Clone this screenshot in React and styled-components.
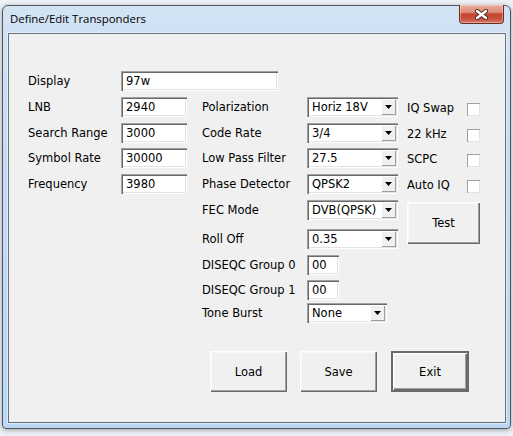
import React from 'react';
import styled, { createGlobalStyle } from 'styled-components';

const GlobalStyle = createGlobalStyle`
  html, body {
    margin: 0;
    padding: 0;
    background: #eef1f5;
  }
  body {
    width: 513px;
    height: 436px;
    overflow: hidden;
    font-family: "DejaVu Sans", Tahoma, sans-serif;
  }
`;

const leftRows = [
  { label: 'LNB', value: '2940' },
  { label: 'Search Range', value: '3000' },
  { label: 'Symbol Rate', value: '30000' },
  { label: 'Frequency', value: '3980' }
];

const comboRows = [
  { label: 'Polarization', value: 'Horiz 18V' },
  { label: 'Code Rate', value: '3/4' },
  { label: 'Low Pass Filter', value: '27.5' },
  { label: 'Phase Detector', value: 'QPSK2' },
  { label: 'FEC Mode', value: 'DVB(QPSK)' },
  { label: 'Roll Off', value: '0.35' }
];

const checkRows = ['IQ Swap', '22 kHz', 'SCPC', 'Auto IQ'];

const CloseGlyph = () => (
  <svg width='13' height='11' viewBox='0 0 13 11'>
    <path d='M2 2 L11 9 M11 2 L2 9' stroke='#4b2620' strokeWidth='4.2' strokeLinecap='round' />
    <path d='M2 2 L11 9 M11 2 L2 9' stroke='#ffffff' strokeWidth='2.4' strokeLinecap='round' />
  </svg>
);

const DropArrow = () => (
  <svg width='7' height='4' viewBox='0 0 7 4'>
    <polygon points='0,0 7,0 3.5,4' fill='#000' />
  </svg>
);

const Combo = ({ row, value, width }) => (
  <ComboBox $row={row} $width={width}>
    <ComboText>{value}</ComboText>
    <DropButton>
      <DropArrow />
    </DropButton>
  </ComboBox>
);

const App = () => {
  const mapLeft = () =>
    leftRows.map((item, i) => (
      <React.Fragment key={item.label}>
        <Label $row={i + 2} $col={1}>{item.label}</Label>
        <Field $row={i + 2} $col={2} $width={66} readOnly value={item.value} />
      </React.Fragment>
    ));

  const mapCombos = () =>
    comboRows.map((item, i) => (
      <React.Fragment key={item.label}>
        <Label $row={i + 2} $col={3}>{item.label}</Label>
        <Combo row={i + 2} value={item.value} width={91} />
      </React.Fragment>
    ));

  const mapChecks = () =>
    checkRows.map((name, i) => (
      <React.Fragment key={name}>
        <Label $row={i + 2} $col={5} $drop={1}>{name}</Label>
        <CheckBox $row={i + 2} />
      </React.Fragment>
    ));

  return (
    <>
      <GlobalStyle />
      <Desktop>
        <Window>
          <TitleBar>
            <Title>Define/Edit Transponders</Title>
            <CloseButton>
              <CloseGlyph />
            </CloseButton>
          </TitleBar>
          <ClientArea>
            <Form>
              <Label $row={1} $col={1}>Display</Label>
              <Field $row={1} $col={2} $span={2} $width={157} readOnly value='97w' />

              {mapLeft()}
              {mapCombos()}
              {mapChecks()}

              <TestButton>Test</TestButton>

              <Label $row={8} $col={3}>DISEQC Group 0</Label>
              <Field $row={8} $col={4} $width={32} readOnly value='00' />
              <Label $row={9} $col={3}>DISEQC Group 1</Label>
              <Field $row={9} $col={4} $width={32} readOnly value='00' />

              <Label $row={10} $col={3}>Tone Burst</Label>
              <Combo row={10} value='None' width={80} />
            </Form>

            <ButtonRow>
              <PushButton>Load</PushButton>
              <PushButton>Save</PushButton>
              <PushButton $default>Exit</PushButton>
            </ButtonRow>
          </ClientArea>
        </Window>
      </Desktop>
    </>
  );
};

export default App;

const sunken = `
  box-shadow: inset 1px 1px #a0a0a0, inset 2px 2px #696969,
    inset -1px -1px #ffffff, inset -2px -2px #e3e3e3;
`;

const raised = `
  box-shadow: inset 1px 1px #ffffff, inset -1px -1px #696969,
    inset -2px -2px #a0a0a0, inset 2px 2px #f8f8f8;
`;

const Desktop = styled.div`
  padding: 5px 2px 0 2px;
`;

const Window = styled.div`
  width: 509px;
  height: 424px;
  box-sizing: border-box;
  display: flex;
  flex-direction: column;
  padding: 0 4px 5px 5px;
  border: 1px solid #4d5864;
  border-radius: 6px 6px 4px 4px;
  background: linear-gradient(180deg, #d2e3f4 0%, #c4daf0 45%, #bcd7f3 100%);
  box-shadow: 0 1px 5px rgba(0, 0, 0, 0.35);
`;

const TitleBar = styled.div`
  height: 27px;
  display: flex;
  justify-content: space-between;
  align-items: flex-start;
`;

const Title = styled.div`
  padding: 5px 0 0 2px;
  font-family: "Open Sans", "Noto Sans", sans-serif;
  font-size: 11.4px;
  line-height: 16px;
  color: #000;
`;

const CloseButton = styled.div`
  width: 45px;
  height: 19px;
  box-sizing: border-box;
  margin: -1px 2px 0 0;
  display: flex;
  align-items: center;
  justify-content: center;
  border: 1px solid #6b2b22;
  border-top: none;
  border-radius: 0 0 4px 4px;
  background: linear-gradient(
    180deg,
    #e9ac9e 0%,
    #df8e7b 40%,
    #c44630 50%,
    #c64f3b 75%,
    #d77b69 100%
  );
  box-shadow: inset 0 0 0 1px rgba(255, 255, 255, 0.35);
`;

const ClientArea = styled.div`
  flex: 1;
  padding: 37px 0 0 19px;
  background: #f0f0f0;
  border: 1px solid #66737f;
  box-shadow: 0 0 0 1px rgba(255, 255, 255, 0.45);
  font-size: 11.5px;
  color: #000;
`;

const Form = styled.div`
  display: grid;
  grid-template-columns: 93px 81px 105px 100px 60px 13px;
  grid-template-rows: 26px 26px 25px 26px 26px 29px 26px 25px 23px 20px;
  align-items: start;
`;

const Label = styled.div`
  grid-row: ${p => p.$row};
  grid-column: ${p => p.$col};
  height: 20px;
  line-height: 20px;
  padding-top: ${p => (p.$drop ? 1 : 0)}px;
  white-space: nowrap;
`;

const Field = styled.input`
  grid-row: ${p => p.$row};
  grid-column: ${p => p.$col} / span ${p => p.$span || 1};
  width: ${p => p.$width}px;
  height: 20px;
  box-sizing: border-box;
  margin: 0;
  padding: 0 0 0 5px;
  border: none;
  outline: none;
  background: #fff;
  font-family: inherit;
  font-size: 11.5px;
  color: #000;
  ${sunken}
`;

const ComboBox = styled.div`
  grid-row: ${p => p.$row};
  grid-column: 4;
  width: ${p => p.$width}px;
  height: 20px;
  box-sizing: border-box;
  padding: 2px;
  display: flex;
  align-items: stretch;
  background: #fff;
  ${sunken}
`;

const ComboText = styled.div`
  flex: 1;
  padding-left: 3px;
  line-height: 16px;
  white-space: nowrap;
  overflow: hidden;
`;

const DropButton = styled.div`
  width: 15px;
  display: flex;
  align-items: center;
  justify-content: center;
  background: #f0f0f0;
  box-shadow: inset 1px 1px #ffffff, inset -1px -1px #a0a0a0;
`;

const CheckBox = styled.div`
  grid-row: ${p => p.$row};
  grid-column: 6;
  width: 13px;
  height: 13px;
  margin-top: 6px;
  box-sizing: border-box;
  background: #fff;
  box-shadow: inset 1px 1px #a0a0a0, inset -1px -1px #e3e3e3;
`;

const TestButton = styled.div`
  grid-row: 6 / span 2;
  grid-column: 5 / span 2;
  width: 73px;
  height: 42px;
  margin-top: 2px;
  display: flex;
  align-items: center;
  justify-content: center;
  background: #f0f0f0;
  ${raised}
`;

const ButtonRow = styled.div`
  display: flex;
  gap: 13px;
  margin: 28px 0 0 182px;
`;

const PushButton = styled.div`
  width: ${p => (p.$default ? 78 : 77)}px;
  height: 41px;
  box-sizing: border-box;
  margin-left: ${p => (p.$default ? 1 : 0)}px;
  display: flex;
  align-items: center;
  justify-content: center;
  background: #f0f0f0;
  border: ${p => (p.$default ? '2px solid #6a6a6a' : 'none')};
  ${raised}
`;
